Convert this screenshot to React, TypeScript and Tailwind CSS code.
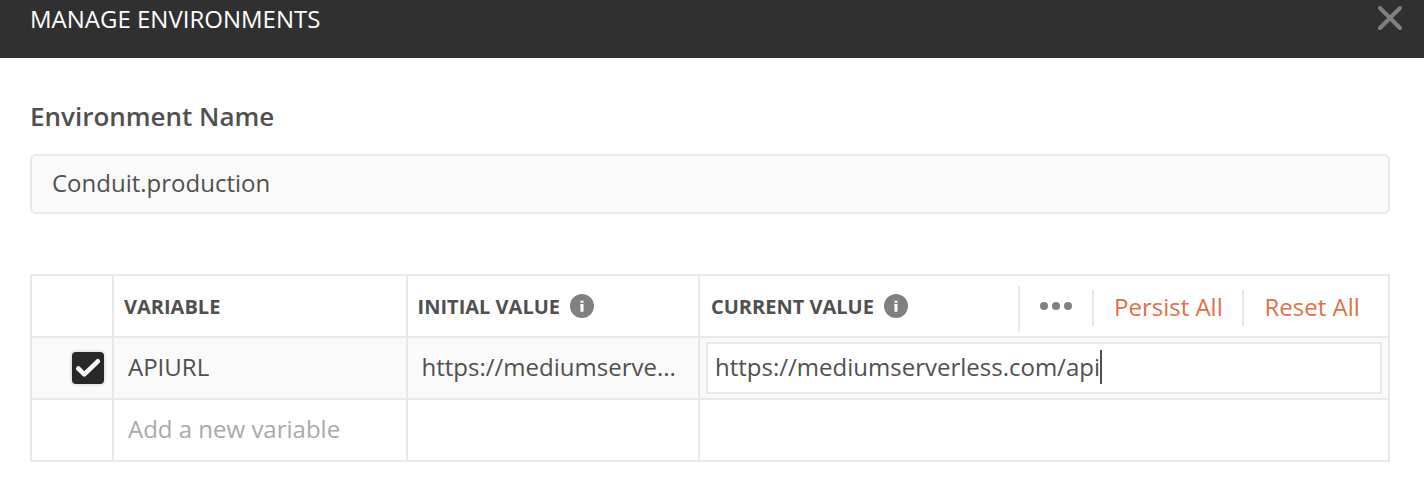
function Info() {
  return (
    <svg className="h-6 w-6 shrink-0" viewBox="0 0 24 24">
      <circle cx="12" cy="12" r="12" fill="#808080" />
      <path d="M10.5 6.8h3v2h-3zM10.2 10h3.3v7.7h-3v-6.2h-.3z" fill="#fff" />
    </svg>
  );
}

const cols = "grid grid-cols-[82px_294px_292px_1fr]";
const cell = "flex items-center border-r-2 border-[#e8e8e8]";

export default function App() {
  return (
    <div className="h-[496px] w-[1424px] overflow-hidden bg-white font-['Open_Sans',sans-serif] text-[24px] leading-8 whitespace-nowrap text-[#505050]">
      <header className="flex h-[58px] items-start justify-between bg-[#303030] pt-[3px] pr-[21px] pl-[30px] text-white">
        <h1 className="text-[24px]">MANAGE ENVIRONMENTS</h1>
        <svg className="mt-[2px] h-[26px] w-[26px]" viewBox="0 0 26 26" fill="none" stroke="#808080" strokeWidth="4" strokeLinecap="round">
          <path d="M3 3L23 23M23 3L3 23" />
        </svg>
      </header>
      <main className="pt-[42px] pr-[34px] pl-[30px]">
        <h2 className="text-[26px] font-semibold">Environment Name</h2>
        <div className="mt-[22px] flex h-[60px] items-center rounded-md border-2 border-[#e8e8e8] bg-[#fafafa] px-5 pb-[2px]">Conduit.production</div>
        <div className="mt-[60px] border-2 border-[#e8e8e8]">
          <div className={cols + " h-[62px] border-b-2 border-[#e8e8e8] text-[20px] font-bold"}>
            <div className={cell} />
            <div className={cell + " pt-[2px] pl-[10px]"}>VARIABLE</div>
            <div className={cell + " gap-[10px] pl-[9.6px]"}><span className="pt-[2px]">INITIAL VALUE</span><Info /></div>
            <div className="flex items-center gap-[10px] pl-[11px]">
              <span className="pt-[2px]">CURRENT VALUE</span><Info />
              <div className="ml-auto flex items-center text-[24px] font-normal text-[#e07046]">
                <div className="mt-[6px] flex h-[46px] w-[74px] items-center border-l-2 border-[#e8e8e8] pb-[6px] pl-5">
                  <svg width="34" height="8" viewBox="0 0 34 8" fill="#808080"><circle cx="4" cy="4" r="4" /><circle cx="16" cy="4" r="4" /><circle cx="28" cy="4" r="4" /></svg>
                </div>
                <div className="mt-1 flex h-9 w-[150px] items-center border-l-2 border-[#e8e8e8] pb-[2px] pl-5">Persist All</div>
                <div className="mt-1 flex h-9 w-[146px] items-center border-l-2 border-[#e8e8e8] pb-[2px] pl-[20.5px]">Reset All</div>
              </div>
            </div>
          </div>
          <div className={cols + " h-[62px] border-b-2 border-[#e8e8e8] bg-[#fafafa]"}>
            <div className={cell + " justify-end pr-[6px]"}>
              <svg width="36" height="36" viewBox="-2 -2 36 36"><rect x="-1" y="-1" width="34" height="34" rx="5" fill="#282828" stroke="#e8e8e8" strokeWidth="2" /><path d="M6.3 16.5L12.3 22.3L25.8 9.3" fill="none" stroke="#fff" strokeWidth="4.6" strokeLinecap="round" strokeLinejoin="round" /></svg>
            </div>
            <div className={cell + " pb-[2px] pl-[14px]"}>APIURL</div>
            <div className={cell + " pb-[2px] pl-[13.5px]"}>https://mediumserve...</div>
            <div className="flex items-center px-[6px]">
              <div className="flex h-[52px] w-full items-center border-2 border-[#e8e8e8] bg-white pl-[7px]">
                <span className="pb-[2px]">https://mediumserverless.com/api</span>
                <span className="mb-[2px] h-[34px] w-[2px] bg-[#505050]" />
              </div>
            </div>
          </div>
          <div className={cols + " h-[60px]"}>
            <div className={cell} />
            <div className={cell + " pb-[2px] pl-[14px] text-[#a9a9a9]"}>Add a new variable</div>
            <div className={cell} />
            <div />
          </div>
        </div>
      </main>
    </div>
  );
}
